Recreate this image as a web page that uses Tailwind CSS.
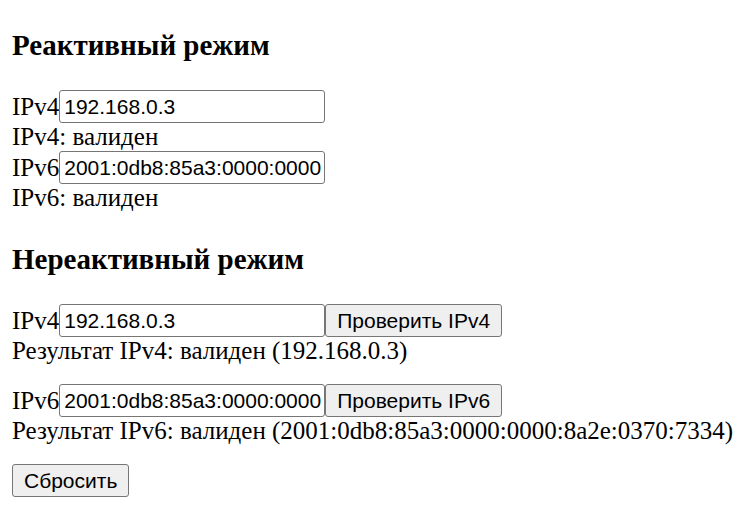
<!DOCTYPE html>
<html lang="ru">
<head>
<meta charset="utf-8">
<meta name="viewport" content="width=device-width, initial-scale=1">
<title>IPv4 / IPv6</title>
<script src="https://cdn.jsdelivr.net/npm/@tailwindcss/browser@4"></script>
</head>
<body class="bg-white px-3 pt-7 pb-4 font-['Liberation_Serif',serif] text-[25px] leading-7 text-black">
<main>
  <section>
    <h3 class="mb-7 text-[29px] leading-[34px] font-bold">Реактивный режим</h3>
    <div class="flex items-center">
      <label for="r4">IPv4</label>
      <input id="r4" type="text" value="192.168.0.3" class="h-[33px] w-[266px] rounded-[3px] border border-[#767676] bg-white pr-[3px] pl-1 font-['Liberation_Sans',sans-serif] text-[21px]">
    </div>
    <p>IPv4: валиден</p>
    <div class="flex items-center">
      <label for="r6">IPv6</label>
      <input id="r6" type="text" value="2001:0db8:85a3:0000:0000:8a2e:0370:7334" class="h-[33px] w-[266px] rounded-[3px] border border-[#767676] bg-white pr-[3px] pl-1 font-['Liberation_Sans',sans-serif] text-[21px]">
    </div>
    <p>IPv6: валиден</p>
  </section>
  <section class="mt-[30px]">
    <h3 class="mb-7 text-[29px] leading-[34px] font-bold">Нереактивный режим</h3>
    <div class="mb-[19px]">
      <div class="flex items-center">
        <label for="n4">IPv4</label>
        <input id="n4" type="text" value="192.168.0.3" class="h-[33px] w-[266px] rounded-[3px] border border-[#767676] bg-white pr-[3px] pl-1 font-['Liberation_Sans',sans-serif] text-[21px]">
        <button type="button" class="h-[33px] rounded-[3px] border border-[#767676] bg-[#efefef] px-[11px] font-['Liberation_Sans',sans-serif] text-[21px]">Проверить IPv4</button>
      </div>
      <p>Результат IPv4: валиден (192.168.0.3)</p>
    </div>
    <div class="mb-[19px]">
      <div class="flex items-center">
        <label for="n6">IPv6</label>
        <input id="n6" type="text" value="2001:0db8:85a3:0000:0000:8a2e:0370:7334" class="h-[33px] w-[266px] rounded-[3px] border border-[#767676] bg-white pr-[3px] pl-1 font-['Liberation_Sans',sans-serif] text-[21px]">
        <button type="button" class="h-[33px] rounded-[3px] border border-[#767676] bg-[#efefef] px-[11px] font-['Liberation_Sans',sans-serif] text-[21px]">Проверить IPv6</button>
      </div>
      <p class="whitespace-nowrap">Результат IPv6: валиден (2001:0db8:85a3:0000:0000:8a2e:0370:7334)</p>
    </div>
    <button type="button" class="block h-[33px] rounded-[3px] border border-[#767676] bg-[#efefef] px-[11px] font-['Liberation_Sans',sans-serif] text-[21px]">Сбросить</button>
  </section>
</main>
</body>
</html>
